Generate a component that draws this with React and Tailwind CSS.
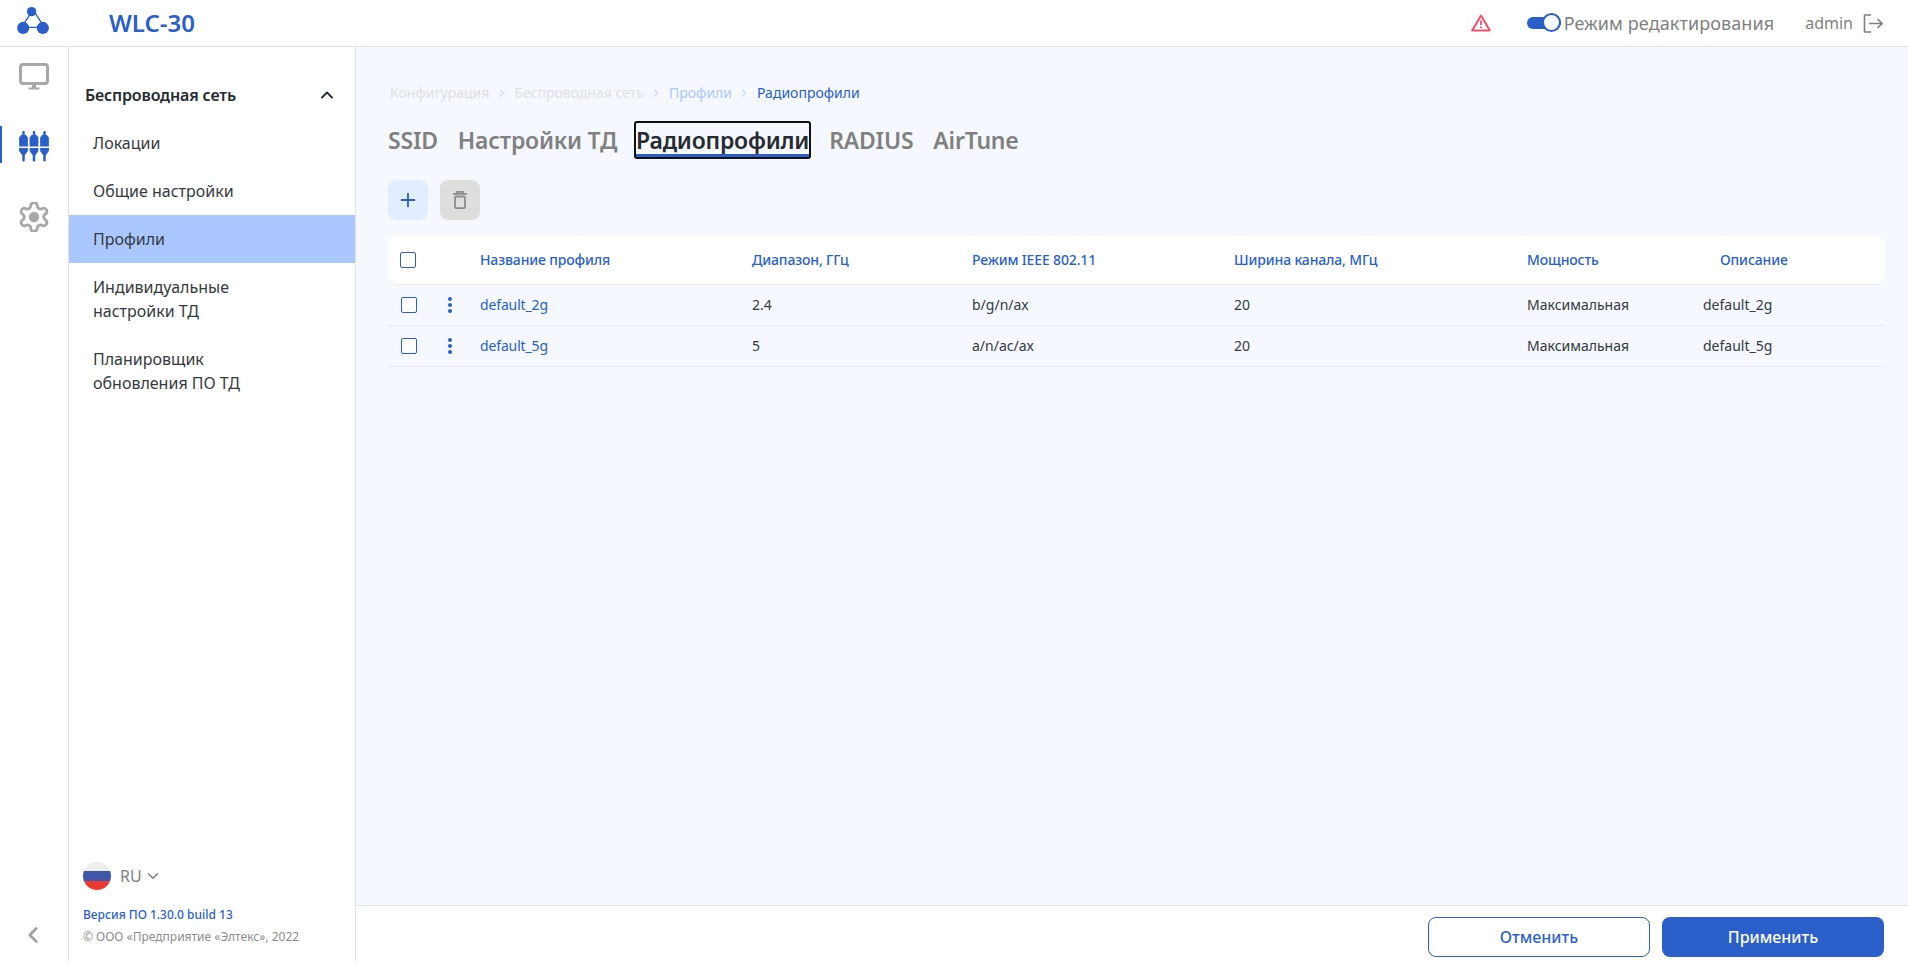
import { ChevronUp, ChevronDown, ChevronLeft, ChevronRight, Plus } from "lucide-react";

// Top level navigation data
const menu = [
  { label: ["Локации"] },
  { label: ["Общие настройки"] },
  { label: ["Профили"], active: true },
  { label: ["Индивидуальные", "настройки ТД"] },
  { label: ["Планировщик", "обновления ПО ТД"] },
];

const tabs = ["SSID", "Настройки ТД", "Радиопрофили", "RADIUS", "AirTune"];

const rows = [
  { name: "default_2g", range: "2.4", mode: "b/g/n/ax", width: "20", power: "Максимальная", desc: "default_2g" },
  { name: "default_5g", range: "5", mode: "a/n/ac/ax", width: "20", power: "Максимальная", desc: "default_5g" },
];

function Logo() {
  return (
    <svg width="32" height="28" viewBox="0 0 34 30" fill="#2a5fc9">
      <path d="M15 7 L6 21 M19 7 L28 21 M9 23 H25" stroke="#2a5fc9" strokeWidth="1.4" fill="none" />
      <circle cx="15.5" cy="6" r="5" />
      <circle cx="6.5" cy="23.5" r="6.5" />
      <circle cx="27.5" cy="23.5" r="6.5" />
    </svg>
  );
}

function MonitorIcon() {
  return (
    <svg width="30" height="27" viewBox="0 0 30 27" fill="none">
      <rect x="1.5" y="1.5" width="27" height="19" rx="2.5" stroke="#a8a8a8" strokeWidth="3" />
      <path d="M13 22 h4 v2.5 h-4z M9.5 24.5 h11 v2 h-11z" fill="#a8a8a8" />
    </svg>
  );
}

function MixerIcon() {
  const xs = [4.5, 15, 25.5];
  return (
    <svg width="30" height="31" viewBox="0 0 30 31" fill="#2a5fc9">
      {xs.map((x) => (
        <g key={x}>
          <rect x={x - 1.25} y="0" width="2.5" height="6" rx="1" />
          <path d={`M${x - 2.5} 4 h5 l1.9 2.5 v9 h-8.8 v-9z`} />
          <path d={`M${x - 4.4} 17 h8.8 v3 l-2.9 4 h-3 l-2.9 -4z`} />
          <rect x={x - 1.25} y="23" width="2.5" height="7.5" rx="1" />
        </g>
      ))}
    </svg>
  );
}

function GearIcon() {
  return (
    <svg width="30" height="30" viewBox="1.5 1.5 21 21" fill="none" stroke="#a8a8a8" strokeWidth="2" strokeLinejoin="round">
      <path d="M12.22 2h-.44a2 2 0 0 0-2 2v.18a2 2 0 0 1-1 1.73l-.43.25a2 2 0 0 1-2 0l-.15-.08a2 2 0 0 0-2.73.73l-.22.38a2 2 0 0 0 .73 2.73l.15.1a2 2 0 0 1 1 1.72v.51a2 2 0 0 1-1 1.74l-.15.09a2 2 0 0 0-.73 2.73l.22.38a2 2 0 0 0 2.73.73l.15-.08a2 2 0 0 1 2 0l.43.25a2 2 0 0 1 1 1.73V20a2 2 0 0 0 2 2h.44a2 2 0 0 0 2-2v-.18a2 2 0 0 1 1-1.73l.43-.25a2 2 0 0 1 2 0l.15.08a2 2 0 0 0 2.73-.73l.22-.39a2 2 0 0 0-.73-2.73l-.15-.08a2 2 0 0 1-1-1.74v-.5a2 2 0 0 1 1-1.74l.15-.09a2 2 0 0 0 .73-2.73l-.22-.38a2 2 0 0 0-2.73-.73l-.15.08a2 2 0 0 1-2 0l-.43-.25a2 2 0 0 1-1-1.73V4a2 2 0 0 0-2-2z" />
      <circle cx="12" cy="12" r="3.6" fill="#a8a8a8" stroke="none" />
    </svg>
  );
}

function WarningIcon() {
  return (
    <svg width="20" height="18" viewBox="0 0 20 18" fill="none">
      <path d="M10 1.5 L18.8 16.5 H1.2 Z" stroke="#f2506b" strokeWidth="2" strokeLinejoin="round" />
      <path d="M10 6.5 V11 M10 12.6 V14.2" stroke="#f2506b" strokeWidth="1.8" />
    </svg>
  );
}

function LogoutIcon() {
  return (
    <svg width="20" height="19" viewBox="0 0 20 19" fill="none" stroke="#7f7f7f" strokeWidth="1.6">
      <path d="M8 1 H1.5 V18 H8" strokeLinejoin="round" />
      <path d="M6 9.5 H19 M14.5 5 L19 9.5 L14.5 14" />
    </svg>
  );
}

function TrashIcon() {
  return (
    <svg width="14" height="18" viewBox="0 0 14 18" fill="none" stroke="#8c8c8c" strokeWidth="1.8">
      <path d="M0 2.8 H14 M4 2.8 V0.9 H10 V2.8" />
      <rect x="2" y="5.5" width="10" height="11.6" rx="1" />
    </svg>
  );
}

function Flag() {
  return (
    <div className="w-7 h-7 rounded-full overflow-hidden flex flex-col">
      <div className="h-[9px] bg-[#eeeeee]" />
      <div className="h-[10px] bg-[#3f57a6]" />
      <div className="h-[9px] bg-[#ea3a33]" />
    </div>
  );
}

function Checkbox() {
  return <div className="w-4 h-4 rounded-[2px] border border-[#2a5fc9] bg-white" />;
}

function Kebab() {
  return (
    <div className="flex flex-col gap-[2px] items-center w-[4px]">
      <span className="w-1 h-1 rounded-full bg-[#2a5fc9]" />
      <span className="w-1 h-1 rounded-full bg-[#2a5fc9]" />
      <span className="w-1 h-1 rounded-full bg-[#2a5fc9]" />
    </div>
  );
}

function Crumb({ children, color }) {
  return <span className={color}>{children}</span>;
}

function Sep() {
  return <ChevronRight size={12} className="text-[#abc7ff] mx-[6.5px]" />;
}

function ProfilesTable() {
  return (
    <table className="w-[1497px] table-fixed border-separate border-spacing-0 text-sm text-[#333a40]">
      <colgroup>
        <col className="w-[50px]" />
        <col className="w-[30px]" />
        <col className="w-[272px]" />
        <col className="w-[220px]" />
        <col className="w-[262px]" />
        <col className="w-[293px]" />
        <col className="w-[176px]" />
        <col className="w-[194px]" />
      </colgroup>
      <thead>
        <tr className="h-[49px] text-[#2a5fc9] text-left tracking-[-0.01em]">
          <th className="bg-white rounded-l-lg pl-3 font-medium border-b border-[#e6ecf7]"><Checkbox /></th>
          <th className="bg-white border-b border-[#e6ecf7]" />
          <th className="bg-white px-3 font-medium border-b border-[#e6ecf7]">Название профиля</th>
          <th className="bg-white px-3 font-medium border-b border-[#e6ecf7]">Диапазон, ГГц</th>
          <th className="bg-white px-3 font-medium border-b border-[#e6ecf7]">Режим IEEE 802.11</th>
          <th className="bg-white px-3 font-medium border-b border-[#e6ecf7]">Ширина канала, МГц</th>
          <th className="bg-white px-3 font-medium border-b border-[#e6ecf7]">Мощность</th>
          <th className="bg-white rounded-r-lg pl-[29px] font-medium border-b border-[#e6ecf7]">Описание</th>
        </tr>
      </thead>
      <tbody>
        {rows.map((r) => (
          <tr key={r.name} className="h-[41px]">
            <td className="pl-[13px] border-b border-[#e6ecf7]"><Checkbox /></td>
            <td className="border-b border-[#e6ecf7]"><div className="pl-[10px]"><Kebab /></div></td>
            <td className="px-3 text-[#2a5fc9] tracking-[-0.01em] border-b border-[#e6ecf7]">{r.name}</td>
            <td className="px-3 border-b border-[#e6ecf7]">{r.range}</td>
            <td className="px-3 border-b border-[#e6ecf7]">{r.mode}</td>
            <td className="px-3 border-b border-[#e6ecf7]">{r.width}</td>
            <td className="px-3 border-b border-[#e6ecf7]">{r.power}</td>
            <td className="px-3 border-b border-[#e6ecf7]">{r.desc}</td>
          </tr>
        ))}
      </tbody>
    </table>
  );
}

export default function App() {
  return (
    <div className="h-[961px] flex flex-col overflow-hidden bg-white font-['Noto_Sans',sans-serif]">
      {/* Header */}
      <header className="h-[47px] shrink-0 flex items-center border-b border-[#e4e4e4] bg-white">
        <div className="w-[109px] pl-[17px] pb-[7px]"><Logo /></div>
        <div className="text-2xl font-semibold text-[#2a5fc9] leading-none pb-[1px]">WLC-30</div>
        <div className="ml-auto flex items-center">
          <WarningIcon />
          <div className="relative ml-[36px] w-[34px] h-[12px] rounded-full bg-[#2a5fc9]">
            <div className="absolute -top-[4px] right-0 w-[19px] h-[19px] rounded-full bg-[#f5f8ff] border-2 border-[#2a5fc9]" />
          </div>
          <span className="ml-[3px] text-lg text-[#7f7f7f] tracking-[0.005em]">Режим редактирования</span>
          <span className="ml-[31px] text-base text-[#7f7f7f]">admin</span>
          <div className="ml-[10px] mr-[25px]"><LogoutIcon /></div>
        </div>
      </header>

      <div className="flex-1 flex min-h-0">
        {/* Icon rail */}
        <aside className="w-[69px] shrink-0 border-r border-[#e4e4e4] flex flex-col items-center relative">
          <div className="mt-4"><MonitorIcon /></div>
          <div className="mt-[41px] relative"><MixerIcon /></div>
          <div className="absolute left-0 top-[79px] w-[2px] h-[37px] bg-[#2a5fc9]" />
          <div className="mt-[40px]"><GearIcon /></div>
          <ChevronLeft size={26} strokeWidth={2.4} className="mt-auto mb-[13px] mr-[3px] text-[#a0a0a0]" />
        </aside>

        {/* Section menu */}
        <nav className="w-[287px] shrink-0 border-r border-[#e4e4e4] flex flex-col">
          <div className="h-[72px] pt-9 pl-4 pr-[18px] flex items-start justify-between">
            <span className="text-base font-semibold text-[#252b30] tracking-[-0.01em]">Беспроводная сеть</span>
            <ChevronUp size={20} strokeWidth={2.2} className="mt-[2px] text-[#252b30]" />
          </div>
          {menu.map((item) => (
            <div
              key={item.label[0]}
              className={`pl-6 py-3 text-base leading-6 text-[#333a40] ${item.active ? "bg-[#abc7ff]" : ""}`}
            >
              {item.label.map((l) => (
                <div key={l}>{l}</div>
              ))}
            </div>
          ))}
          <div className="mt-auto pl-[14px] pb-[16px]">
            <div className="flex items-center">
              <Flag />
              <span className="ml-[9px] text-base text-[#7f7f7f]">RU</span>
              <ChevronDown size={18} className="ml-[2px] text-[#7f7f7f]" />
            </div>
            <div className="mt-[17px] text-xs font-medium text-[#2a5fc9]">Версия ПО 1.30.0 build 13</div>
            <div className="mt-[6px] text-xs text-[#8c8c8c]">© ООО «Предприятие «Элтекс», 2022</div>
          </div>
        </nav>

        {/* Content */}
        <div className="flex-1 min-w-0 flex flex-col">
          <main className="flex-1 bg-[#f5f8ff] pl-[32px] pr-[22px] pt-9">
            <div className="flex items-center text-sm leading-5 pl-[2px]">
              <Crumb color="text-[#e0e0e0]">Конфигурация</Crumb>
              <Sep />
              <Crumb color="text-[#e0e0e0]">Беспроводная сеть</Crumb>
              <Sep />
              <Crumb color="text-[#abc7ff]">Профили</Crumb>
              <Sep />
              <Crumb color="text-[#2a5fc9]">Радиопрофили</Crumb>
            </div>
            <div className="mt-[18px] flex items-center gap-5 h-[38px] text-[23px] font-semibold tracking-[-0.009em]">
              {tabs.map((t) =>
                t === "Радиопрофили" ? (
                  <div key={t} className="h-[38px] flex items-center -ml-[3px] -mr-[2px] rounded-[3px] border-2 border-[#111] relative text-[#252b30]">
                    {t}
                    <div className="absolute left-0 right-0 bottom-0 h-[3px] bg-[#2a5fc9]" />
                  </div>
                ) : (
                  <div key={t} className="text-[#808080]">{t}</div>
                )
              )}
            </div>
            <div className="mt-[21px] flex gap-3">
              <div className="w-10 h-10 rounded-lg bg-[#e2edff] flex items-center justify-center">
                <Plus size={22} strokeWidth={2} className="text-[#2a5fc9]" />
              </div>
              <div className="w-10 h-10 rounded-lg bg-[#dedede] flex items-center justify-center">
                <TrashIcon />
              </div>
            </div>
            <div className="mt-4"><ProfilesTable /></div>
          </main>

          <footer className="h-[56px] shrink-0 border-t border-[#e4e4e4] bg-white flex justify-end items-start pt-[11px] pr-6 gap-3">
            <button className="w-[222px] h-10 rounded-lg border border-[#2a5fc9] text-base font-medium text-[#2a5fc9] bg-white">Отменить</button>
            <button className="w-[222px] h-10 rounded-lg bg-[#2a5fc9] text-base font-medium text-white">Применить</button>
          </footer>
        </div>
      </div>
    </div>
  );
}
